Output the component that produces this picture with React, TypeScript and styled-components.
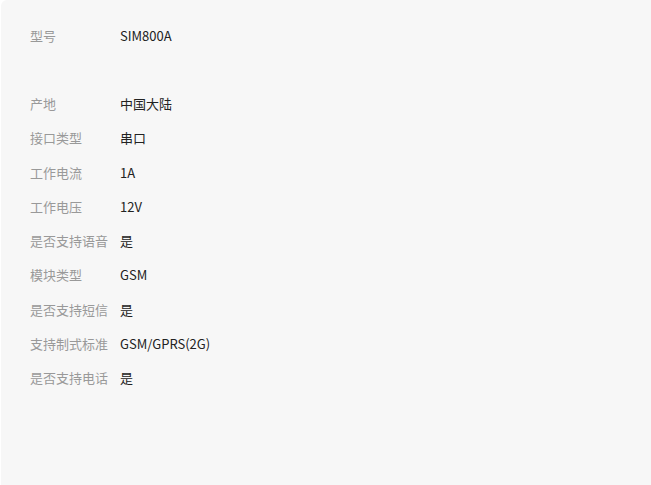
import React from "react";
import styled, { createGlobalStyle } from "styled-components";

const Global = createGlobalStyle`
  html, body { margin: 0; padding: 0; background: #ffffff; }
  body { font-family: "Noto Sans CJK SC", "Noto Sans", sans-serif; }
`;

const Panel = styled.div`
  margin-left: 1px;
  width: 650px;
  height: 485px;
  box-sizing: border-box;
  background: #f7f7f7;
  border-radius: 6px 0 0 0;
  padding: 18px 0 0 29px;
`;

const Row = styled.div`
  display: flex;
  height: 34.25px;
  align-items: center;
  font-size: 13px;
`;

const Label = styled.div`
  width: 90px;
  color: #999999;
  white-space: nowrap;
`;

const Value = styled.div`
  color: #222222;
  white-space: nowrap;
`;

const rows: [string, string][] = [
  ["型号", "SIM800A"],
  ["", ""],
  ["产地", "中国大陆"],
  ["接口类型", "串口"],
  ["工作电流", "1A"],
  ["工作电压", "12V"],
  ["是否支持语音", "是"],
  ["模块类型", "GSM"],
  ["是否支持短信", "是"],
  ["支持制式标准", "GSM/GPRS(2G)"],
  ["是否支持电话", "是"],
];

export default function App() {
  return (
    <>
      <Global />
      <Panel>
        {rows.map(([k, v], i) => (
          <Row key={i}>
            <Label>{k}</Label>
            <Value>{v}</Value>
          </Row>
        ))}
      </Panel>
    </>
  );
}
